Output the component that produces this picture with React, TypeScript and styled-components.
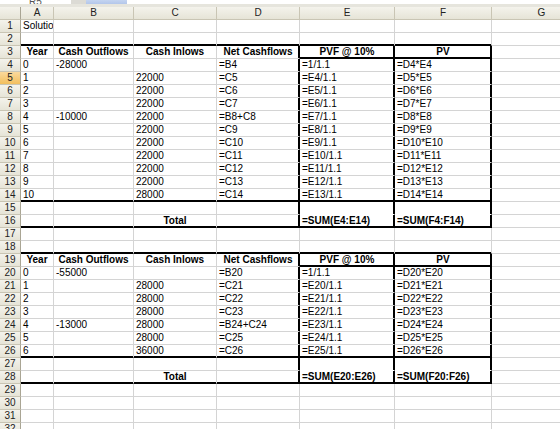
import React from "react";
import styled, {createGlobalStyle} from "styled-components";

const GlobalStyle = createGlobalStyle`
  html, body {
    margin: 0;
    padding: 0;
    background: #fff;
    overflow: hidden;
  }
  body {
    font-family: "Liberation Sans", Arial, sans-serif;
    font-size: 10px;
    color: #000;
  }
`

const Sheet = styled.div`
  width: 560px;
  height: 429px;
  overflow: hidden;
  background: #fff;
`

const FormulaBar = styled.div`
  display: flex;
  height: 4px;
  overflow: hidden;
`

const NameBox = styled.div`
  width: 71px;
  background: #fff;
  color: #555;
  font-size: 10px;
  line-height: 4px;
  text-align: center;
  overflow: hidden;
`

const DropBtn = styled.div`
  width: 15px;
  background: #dcdbd5;
`

const FxBox = styled.div`
  width: 41px;
  background: linear-gradient(#c4d4f0, #b3c6ea);
`

const FormulaInput = styled.div`
  flex: 1;
  background: #fff;
`

const Gap = styled.div`
  height: 3px;
  background: #e6e5dd;
`

const Grid = styled.div`
  display: grid;
  grid-template-columns: 21px 33px 80px 83px 83px 95px 97px 100px;
  grid-auto-rows: 13px;
`

const Head = styled.div<{ $active?: boolean; $row?: boolean }>`
  box-sizing: border-box;
  height: 13px;
  background: ${p => p.$active ? 'linear-gradient(#fbd99c, #f2bf5e)' : 'linear-gradient(#f4f3ec, #e6e4d7)'};
  border-right: 1px solid ${p => p.$row ? '#a9a594' : '#c9c5b4'};
  border-bottom: 1px solid #c9c5b4;
  color: #222;
  font-size: 10px;
  line-height: 12px;
  text-align: center;
  white-space: nowrap;
  overflow: hidden;
`

type CellProps = {
    $b?: boolean;
    $r?: boolean;
    $nb?: boolean;
    $bold?: boolean;
    $center?: boolean;
}

const Cell = styled.div<CellProps>`
  box-sizing: border-box;
  height: 13px;
  padding: 0 2px;
  border-right: 1px solid ${p => p.$r ? '#000' : '#d4d4d4'};
  border-bottom: 1px solid ${p => p.$b ? '#000' : p.$nb ? '#fff' : '#d4d4d4'};
  box-shadow: ${p => {
    const s: string[] = []
    if (p.$b) s.push('inset 0 -1px 0 #000')
    if (p.$r) s.push('inset -1px 0 0 #000')
    return s.length ? s.join(', ') : 'none'
  }};
  font-weight: ${p => p.$bold ? 'bold' : 'normal'};
  text-align: ${p => p.$center ? 'center' : 'left'};
  line-height: 12px;
  white-space: nowrap;
  overflow: hidden;
`

const COLS = ['A', 'B', 'C', 'D', 'E', 'F', 'G']
const ROW_COUNT = 32
const HEADERS = ['Year', 'Cash Outflows', 'Cash Inlows', 'Net Cashflows', 'PVF @ 10%', 'PV']

type Row = { cells: string[]; bold?: boolean[]; center?: boolean[] }

const buildRows = (): Record<number, Row> => {
    const rows: Record<number, Row> = {}
    rows[1] = {cells: ['Solutio']}

    const table = (start: number, years: number, outflows: Record<number, string>, inflows: string[]) => {
        rows[start - 1] = {cells: HEADERS, bold: HEADERS.map(() => true), center: HEADERS.map(() => true)}
        for (let y = 0; y <= years; y++) {
            const r = start + y
            const out = outflows[y] ?? ''
            const net = y === 0 ? `=B${r}` : out ? `=B${r}+C${r}` : `=C${r}`
            const pvf = y === 0 ? '=1/1.1' : `=E${r - 1}/1.1`
            rows[r] = {cells: [String(y), out, y === 0 ? '' : inflows[y - 1], net, pvf, `=D${r}*E${r}`]}
        }
        const last = start + years
        const total = last + 2
        rows[total] = {
            cells: ['', '', 'Total', '', `=SUM(E${start}:E${last})`, `=SUM(F${start}:F${last})`],
            bold: [false, false, true, false, true, true],
            center: [false, false, true, false, false, false],
        }
    }

    table(4, 10, {0: '-28000', 4: '-10000'}, [...Array(9).fill('22000'), '28000'])
    table(20, 6, {0: '-55000', 4: '-13000'}, ['28000', '28000', '28000', '28000', '28000', '36000'])
    return rows
}

const ROWS = buildRows()

const all = [0, 1, 2, 3, 4, 5]
const THICK_BOTTOM: Record<number, number[]> = {
    2: all, 3: [4, 5], 14: all, 16: all,
    18: all, 19: [4, 5], 26: all, 28: all,
}
const NO_GRID_BOTTOM: Record<number, number[]> = {15: [4, 5], 27: [4, 5]}

const thickRight = (r: number, c: number) =>
    [3, 4, 5].includes(c) && ((r >= 3 && r <= 16) || (r >= 19 && r <= 28))

const App = () => {
    return (
        <Sheet>
            <GlobalStyle/>
            <FormulaBar>
                <NameBox>R5</NameBox>
                <DropBtn/>
                <FxBox/>
                <FormulaInput/>
            </FormulaBar>
            <Gap/>
            <Grid>
                <Head $row/>
                {COLS.map(c => <Head key={c}>{c}</Head>)}

                {Array.from({length: ROW_COUNT}, (_, i) => i + 1).map(r => {
                    const row = ROWS[r]
                    return (
                        <React.Fragment key={r}>
                            <Head $row $active={r === 5}>{r}</Head>
                            {COLS.map((c, ci) => (
                                <Cell
                                    key={c}
                                    $b={THICK_BOTTOM[r]?.includes(ci)}
                                    $nb={NO_GRID_BOTTOM[r]?.includes(ci)}
                                    $r={thickRight(r, ci)}
                                    $bold={row?.bold?.[ci]}
                                    $center={row?.center?.[ci]}
                                >
                                    {row?.cells[ci] ?? ''}
                                </Cell>
                            ))}
                        </React.Fragment>
                    )
                })}
            </Grid>
        </Sheet>
    );
};

export default App;
